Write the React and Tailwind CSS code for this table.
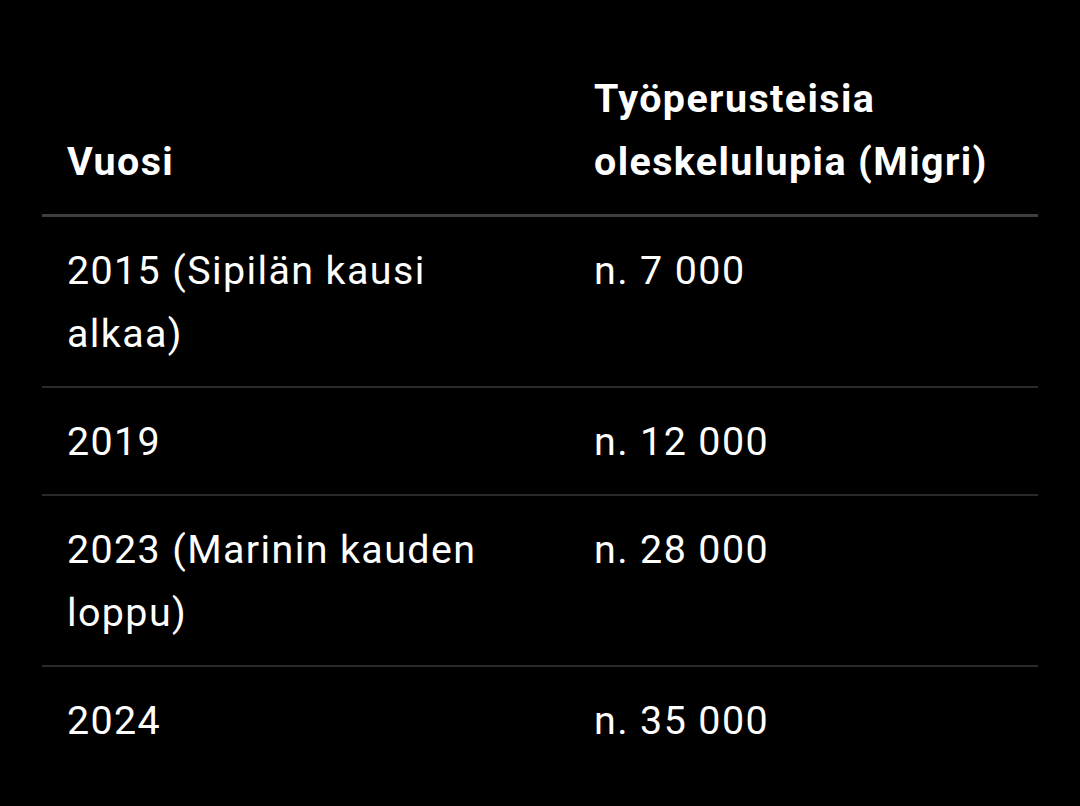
const rows = [
  { year: "2015 (Sipilän kausi alkaa)", count: "n. 7 000" },
  { year: "2019", count: "n. 12 000" },
  { year: "2023 (Marinin kauden loppu)", count: "n. 28 000" },
  { year: "2024", count: "n. 35 000", last: true },
];

export default function App() {
  return (
    <div
      className="min-h-[806px] w-full bg-black text-white px-[42px] pt-[46px]"
      style={{ fontFamily: "Roboto, 'Liberation Sans', sans-serif" }}
    >
      <div className="w-[996px] text-[39.4px] leading-[63px] tracking-[1.4px]">
        {/* Header */}
        <div className="grid grid-cols-[526px_1fr] border-b-[3px] border-[#3e3e3e] font-bold">
          <div className="px-[25px] py-[21px] flex items-end">Vuosi</div>
          <div className="px-[26px] py-[21px]">
            Työperusteisia oleskelulupia (Migri)
          </div>
        </div>

        {/* Rows */}
        {rows.map((r) => (
          <div
            key={r.year}
            className={`grid grid-cols-[526px_1fr] ${
              r.last ? "" : "border-b-2 border-[#2a2a2a]"
            }`}
          >
            <div className="px-[25px] py-[21.5px] w-[470px]">{r.year}</div>
            <div className="px-[26px] py-[21.5px]">{r.count}</div>
          </div>
        ))}
      </div>
    </div>
  );
}
